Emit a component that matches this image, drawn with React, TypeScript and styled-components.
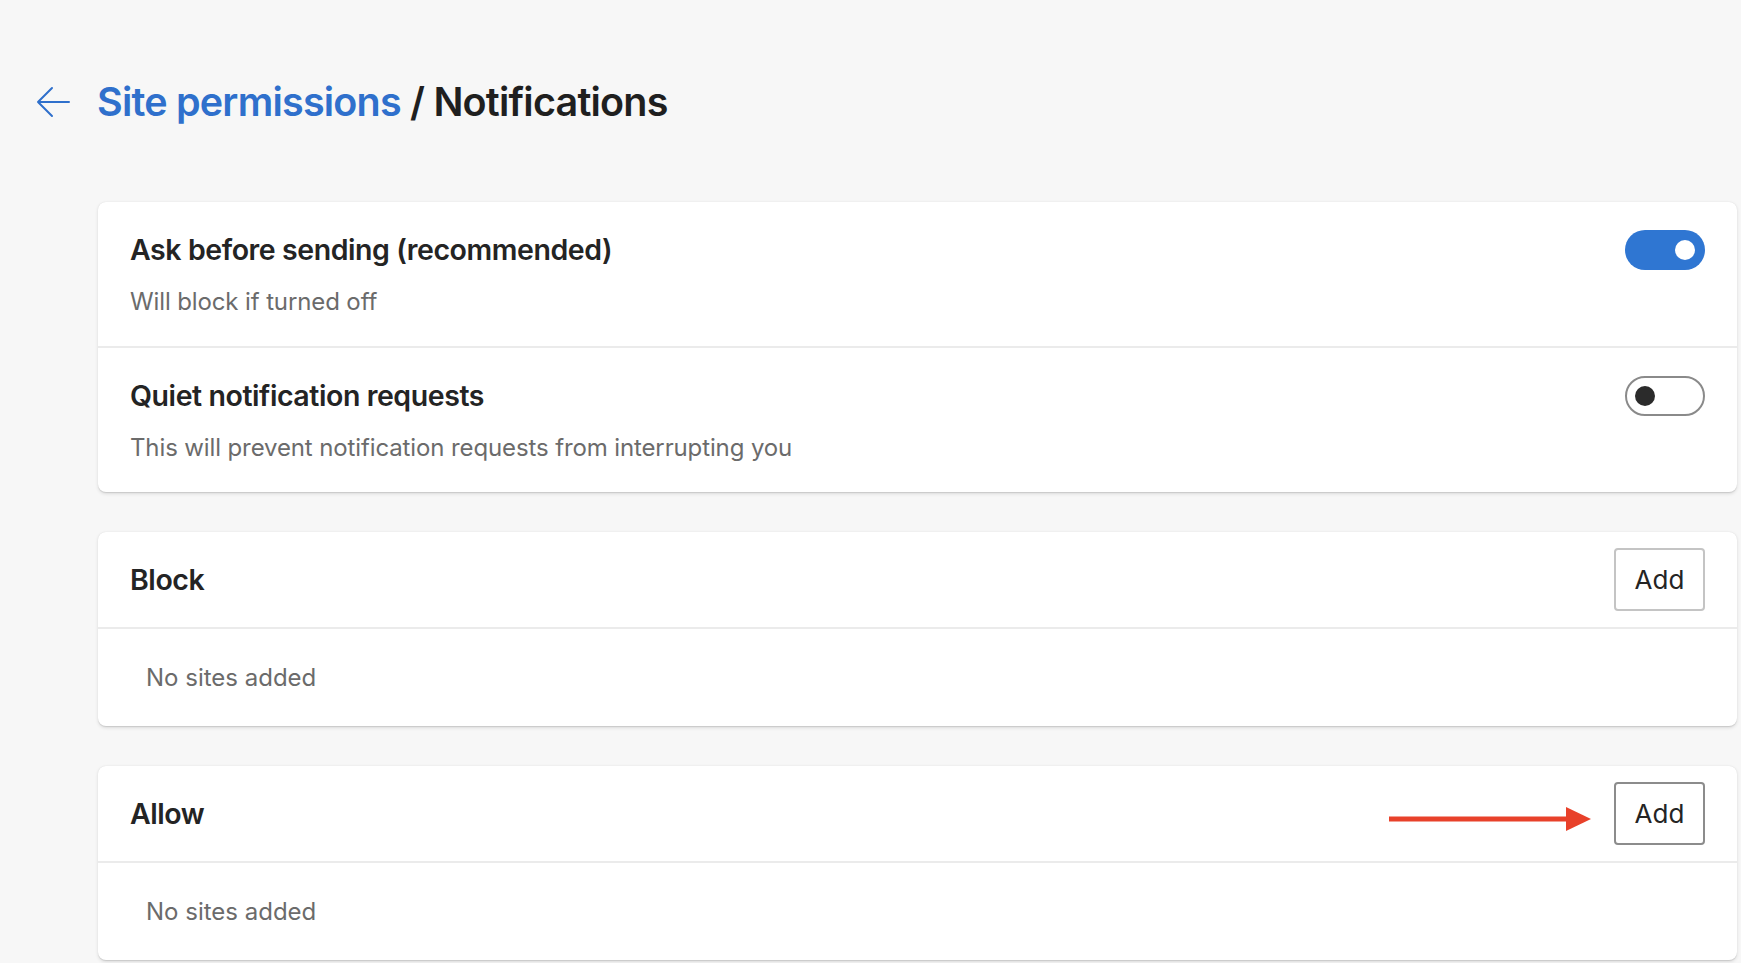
import React from "react";
import styled, { createGlobalStyle } from "styled-components";

const GlobalStyle = createGlobalStyle`
  html, body {
    margin: 0;
    padding: 0;
    background: #f7f7f7;
  }
  body {
    font-family: Inter, "Noto Sans", "Liberation Sans", sans-serif;
    color: #242424;
    -webkit-font-smoothing: antialiased;
  }
`;

const Page = styled.div`
  box-sizing: border-box;
  width: 100%;
  min-height: 963px;
  padding: 72px 4px 0 0;
`;

const Header = styled.div`
  display: flex;
  align-items: center;
  height: 60px;
  padding-left: 36px;
  gap: 27px;
  margin-bottom: 70px;
`;

const BackButton = styled.button`
  display: flex;
  align-items: center;
  justify-content: center;
  padding: 0;
  border: none;
  background: none;
  cursor: pointer;
`;

const Title = styled.h1`
  margin: 0;
  font-size: 39.5px;
  font-weight: 600;
  letter-spacing: -0.02em;
  color: #1f1f1f;
`;

const Crumb = styled.a`
  color: #2f70cc;
  text-decoration: none;
`;

const Cards = styled.div`
  display: flex;
  flex-direction: column;
  gap: 40px;
  padding-left: 98px;
`;

const Card = styled.section`
  background: #fff;
  border-radius: 8px;
  box-shadow: 0 1.6px 3.6px rgba(0, 0, 0, 0.11), 0 0.3px 1px rgba(0, 0, 0, 0.1);
  overflow: hidden;
`;

const Divider = styled.div`
  height: 2px;
  background: #ebebeb;
`;

const SettingRow = styled.div`
  display: flex;
  flex-direction: column;
  gap: 16px;
  padding: 28px 32px 28px 32px;
`;

const RowTop = styled.div`
  display: flex;
  align-items: center;
  justify-content: space-between;
`;

const RowTitle = styled.div`
  font-size: 28.5px;
  font-weight: 600;
  line-height: 36px;
  letter-spacing: -0.015em;
  color: #242424;
`;

const RowSub = styled.div`
  font-size: 24px;
  line-height: 32px;
  letter-spacing: -0.005em;
  color: #6b6b6b;
`;

const Track = styled.button<{ $on: boolean }>`
  position: relative;
  box-sizing: border-box;
  width: 80px;
  height: 40px;
  border-radius: 20px;
  padding: 0;
  cursor: pointer;
  border: ${(p) => (p.$on ? "none" : "2px solid #8a8a8a")};
  background: ${(p) => (p.$on ? "#2f76d2" : "#fff")};
`;

const Knob = styled.span<{ $on: boolean }>`
  position: absolute;
  top: 50%;
  width: 20px;
  height: 20px;
  margin-top: -10px;
  border-radius: 50%;
  background: ${(p) => (p.$on ? "#fff" : "#2b2b2b")};
  ${(p) => (p.$on ? "right: 10px;" : "left: 8px;")}
`;

const ListHead = styled.div`
  display: flex;
  align-items: center;
  justify-content: space-between;
  height: 95px;
  box-sizing: border-box;
  padding: 0 32px;
`;

const HeadRight = styled.div`
  display: flex;
  align-items: center;
  gap: 23px;
`;

const AddButton = styled.button<{ $focused?: boolean }>`
  box-sizing: border-box;
  width: 91px;
  height: 63px;
  border-radius: 4px;
  background: #fff;
  border: 2px solid ${(p) => (p.$focused ? "#8c8c8c" : "#c4c4c4")};
  font-family: inherit;
  font-size: 26px;
  color: #242424;
  cursor: pointer;
`;

const Empty = styled.div`
  padding: 33px 48px 32px 48px;
  font-size: 24px;
  line-height: 32px;
  color: #6b6b6b;
`;

const Pointer = styled.svg`
  margin-top: 11px;
`;

function Toggle({ on }: { on: boolean }) {
  return (
    <Track $on={on} aria-pressed={on}>
      <Knob $on={on} />
    </Track>
  );
}

function Setting({ title, sub, on }: { title: string; sub: string; on: boolean }) {
  return (
    <SettingRow>
      <RowTop>
        <RowTitle>{title}</RowTitle>
        <Toggle on={on} />
      </RowTop>
      <RowSub>{sub}</RowSub>
    </SettingRow>
  );
}

function SiteList({ title, pointed }: { title: string; pointed?: boolean }) {
  return (
    <Card>
      <ListHead>
        <RowTitle>{title}</RowTitle>
        <HeadRight>
          {pointed && (
            <Pointer width="202" height="24" viewBox="0 0 202 24">
              <rect x="0" y="9.5" width="180" height="5" fill="#e8412a" />
              <polygon points="177,0 202,12 177,24" fill="#e8412a" />
            </Pointer>
          )}
          <AddButton $focused={pointed}>Add</AddButton>
        </HeadRight>
      </ListHead>
      <Divider />
      <Empty>No sites added</Empty>
    </Card>
  );
}

export default function App() {
  return (
    <>
      <GlobalStyle />
      <Page>
        <Header>
          <BackButton aria-label="Back">
            <svg width="34" height="32" viewBox="0 0 34 32" fill="none">
              <path d="M33 16H2M16 2L2 16l14 14" stroke="#2f70cc" strokeWidth="2" strokeLinecap="round" strokeLinejoin="round" />
            </svg>
          </BackButton>
          <Title>
            <Crumb href="#">Site permissions</Crumb> / Notifications
          </Title>
        </Header>
        <Cards>
          <Card>
            <Setting title="Ask before sending (recommended)" sub="Will block if turned off" on />
            <Divider />
            <Setting title="Quiet notification requests" sub="This will prevent notification requests from interrupting you" on={false} />
          </Card>
          <SiteList title="Block" />
          <SiteList title="Allow" pointed />
        </Cards>
      </Page>
    </>
  );
}
